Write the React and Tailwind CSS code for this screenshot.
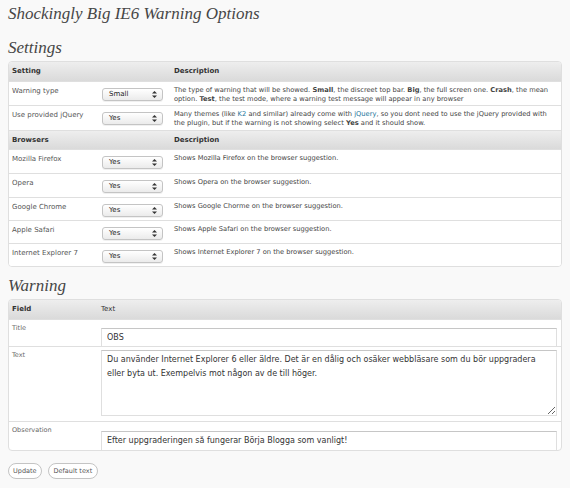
import React from "react";

const browsers = [
  { name: "Mozilla Firefox", h: "h-[24px]" },
  { name: "Opera", h: "h-[24px]" },
  { name: "Google Chrome", h: "h-[23px]" },
  { name: "Apple Safari", h: "h-[23px]" },
  { name: "Internet Explorer 7", h: "h-[23px]" },
];

const Arrows = () => (
  <svg width="5" height="7" viewBox="0 0 5 7" className="block">
    <path d="M2.5 0 L5 2.6 L0 2.6 Z" fill="#333" />
    <path d="M2.5 7 L5 4.4 L0 4.4 Z" fill="#333" />
  </svg>
);

// fake select box, drawn like the old mac dropdown
const Select = ({ value }) => (
  <div className="flex h-[13px] w-[61px] items-center justify-between rounded-[3px] border border-[#c4c4c4] bg-gradient-to-b from-white to-[#ebebeb] pl-[6px] pr-[5px] shadow-[0_1px_0_rgba(0,0,0,0.06)]">
    <span className="text-[7px] text-[#222]">{value}</span>
    <Arrows />
  </div>
);

const HeadRow = ({ first, second, top }) => (
  <div
    className={`flex h-[19px] items-center bg-gradient-to-b from-[#eeeeee] to-[#dadada] text-[7px] font-bold text-[#333] ${
      top ? "" : "border-t border-[#dfdfdf]"
    }`}
  >
    <div className="w-[165px] pl-[3px]">{first}</div>
    <div className="flex-1">{second}</div>
  </div>
);

const SettingRow = ({ label, value, h, children }) => (
  <div className={`flex border-t border-[#dfdfdf] bg-white ${h}`}>
    <div className="w-[93px] pl-[3px] pt-[4px] text-[7px] text-[#555]">{label}</div>
    <div className="w-[72px] pt-[6px]">
      <Select value={value} />
    </div>
    <div className="flex-1 pr-[10px] pt-[4px] text-[6.7px] leading-[8.5px] text-[#444]">{children}</div>
  </div>
);

const App = () => {
  return (
    <div className="min-h-[488px] bg-[#f9f9f9] px-2 pt-[4px] font-['Lucida_Grande','DejaVu_Sans',sans-serif] text-[#333]">
      <h1 className="font-['Liberation_Serif',serif] text-[17px] leading-[20px] italic text-[#464646]">
        Shockingly Big IE6 Warning Options
      </h1>

      <h2 className="mt-[14px] font-['Liberation_Serif',serif] text-[17px] leading-[20px] italic text-[#464646]">
        Settings
      </h2>

      <div className="mt-[3px] overflow-hidden rounded-[4px] border border-[#dfdfdf] bg-white">
        <HeadRow first="Setting" second="Description" top />
        <SettingRow label="Warning type" value="Small" h="h-[24px]">
          The type of warning that will be showed. <b>Small</b>, the discreet top bar. <b>Big</b>, the full
          screen one. <b>Crash</b>, the mean option. <b>Test</b>, the test mode, where a warning test message will
          appear in any browser
        </SettingRow>
        <SettingRow label="Use provided jQuery" value="Yes" h="h-[25px]">
          Many themes (like <span className="text-[#21759b]">K2</span> and similar) already come with{" "}
          <span className="text-[#21759b]">jQuery</span>, so you dont need to use the jQuery provided with the
          plugin, but if the warning is not showing select <b>Yes</b> and it should show.
        </SettingRow>
        <HeadRow first="Browsers" second="Description" />
        {browsers.map((b) => (
          <SettingRow key={b.name} label={b.name} value="Yes" h={b.h}>
            Shows {b.name === "Google Chrome" ? "Google Chorme" : b.name} on the browser suggestion.
          </SettingRow>
        ))}
      </div>

      <h2 className="mt-[9px] font-['Liberation_Serif',serif] text-[17px] leading-[20px] italic text-[#464646]">
        Warning
      </h2>

      <div className="mt-[3px] overflow-hidden rounded-[4px] border border-[#dfdfdf] bg-white">
        <div className="flex h-[19px] items-center bg-gradient-to-b from-[#eeeeee] to-[#dadada] text-[7px] font-bold text-[#333]">
          <div className="w-[92px] pl-[3px]">Field</div>
          <div className="flex-1 font-normal">Text</div>
        </div>

        <div className="flex h-[27px] border-t border-[#dfdfdf]">
          <div className="w-[92px] pl-[3px] pt-[4px] text-[6.5px] text-[#666]">Title</div>
          <div className="flex-1 pr-[4px] pt-[3px]">
            <input
              readOnly
              value="OBS"
              className="h-[19px] w-full border border-[#dfdfdf] border-t-[#c6c6c6] px-[5px] text-[8px] text-[#333] outline-none"
            />
          </div>
        </div>

        <div className="flex h-[75px] border-t border-[#dfdfdf]">
          <div className="w-[92px] pl-[3px] pt-[4px] text-[6.5px] text-[#666]">Text</div>
          <div className="flex-1 pr-[4px] pt-[3px]">
            <textarea
              readOnly
              value="Du använder Internet Explorer 6 eller äldre. Det är en dålig och osäker webbläsare som du bör uppgradera eller byta ut. Exempelvis mot någon av de till höger."
              className="block h-[66px] w-full resize border border-[#dfdfdf] border-t-[#c6c6c6] px-[5px] pt-[2px] text-[8px] leading-[14px] text-[#333] outline-none"
            />
          </div>
        </div>

        <div className="flex h-[29px] border-t border-[#dfdfdf]">
          <div className="w-[92px] pl-[3px] pt-[4px] text-[6.5px] text-[#666]">Observation</div>
          <div className="flex-1 pr-[4px] pt-[4px]">
            <input
              readOnly
              value="Efter uppgraderingen så fungerar Börja Blogga som vanligt!"
              className="h-[20px] w-full border border-[#dfdfdf] border-t-[#c6c6c6] px-[5px] text-[8px] text-[#333] outline-none"
            />
          </div>
        </div>
      </div>

      <div className="mt-[12px] flex gap-[6px]">
        <button className="h-[16px] rounded-full border border-[#c4c4c4] bg-white px-[4px] text-[6.5px] leading-none text-[#555]">
          Update
        </button>
        <button className="h-[16px] rounded-full border border-[#c4c4c4] bg-white px-[5px] text-[6.5px] leading-none text-[#555]">
          Default text
        </button>
      </div>
    </div>
  );
};

export default App;
